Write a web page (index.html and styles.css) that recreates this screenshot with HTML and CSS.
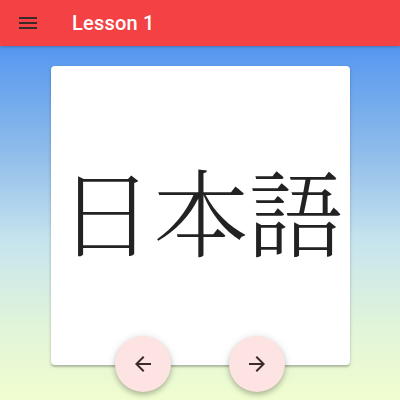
FILE: index.html
```html
<!DOCTYPE html>
<html lang="ja">
<head>
<meta charset="utf-8">
<link rel="stylesheet" href="styles.css">
</head>
<body>
<header class="toolbar">
  <button class="menu-btn" aria-label="menu">
    <svg viewBox="0 0 24 24" width="24" height="24"><path d="M3 18h18v-2H3v2zm0-5h18v-2H3v2zm0-7v2h18V6H3z" fill="#3a2a2a"/></svg>
  </button>
  <h1 class="title">Lesson 1</h1>
</header>
<main class="stage">
  <div class="card">
    <span class="word">日本語</span>
  </div>
  <div class="nav">
    <button class="fab" aria-label="previous">
      <svg viewBox="0 0 24 24" width="24" height="24"><path d="M20 11H7.83l5.59-5.59L12 4l-8 8 8 8 1.41-1.41L7.83 13H20v-2z" fill="#3a2a2a"/></svg>
    </button>
    <button class="fab" aria-label="next">
      <svg viewBox="0 0 24 24" width="24" height="24"><path d="M12 4l-1.41 1.41L16.17 11H4v2h12.17l-5.58 5.59L12 20l8-8z" fill="#3a2a2a"/></svg>
    </button>
  </div>
</main>
</body>
</html>
```
FILE: styles.css
```css
html, body {
  margin: 0;
  padding: 0;
  height: 100%;
}
body {
  font-family: Roboto, "Liberation Sans", Arial, sans-serif;
  display: flex;
  flex-direction: column;
  overflow: hidden;
}
.toolbar {
  height: 46px;
  flex: none;
  background: #f44144;
  display: flex;
  align-items: center;
  padding: 0 16px 0 16px;
  box-shadow: 0 1px 3px rgba(0,0,0,0.25);
  position: relative;
  z-index: 2;
}
.menu-btn {
  border: none;
  background: none;
  padding: 0;
  width: 24px;
  height: 24px;
  display: flex;
}
.title {
  margin: 0 0 0 32px;
  font-size: 20px;
  font-weight: 500;
  color: #fff;
  letter-spacing: 0.2px;
}
.stage {
  flex: 1;
  background: linear-gradient(180deg, #5597f0 0%, #8fbcea 30%, #c6e4ee 55%, #e2f5d9 80%, #f0fdcf 100%);
  display: flex;
  flex-direction: column;
  align-items: center;
  padding-top: 20px;
}
.card {
  width: 299px;
  height: 299px;
  background: #fff;
  border-radius: 4px;
  box-shadow: 0 2px 2px rgba(0,0,0,0.2), 0 1px 4px rgba(0,0,0,0.12);
  display: flex;
  align-items: center;
  justify-content: center;
}
.word {
  font-family: "Noto Serif CJK JP", "Liberation Serif", serif;
  font-size: 95px;
  font-weight: 300;
  color: #222;
  line-height: 1;
  margin-top: -12px;
  margin-left: 2px;
}
.nav {
  display: flex;
  gap: 58px;
  margin-top: -29px;
}
.fab {
  width: 56px;
  height: 56px;
  border-radius: 50%;
  border: none;
  background: #fde4e2;
  display: flex;
  align-items: center;
  justify-content: center;
  box-shadow: 0 3px 5px rgba(0,0,0,0.2), 0 1px 10px rgba(0,0,0,0.12);
  padding: 0;
}
```
